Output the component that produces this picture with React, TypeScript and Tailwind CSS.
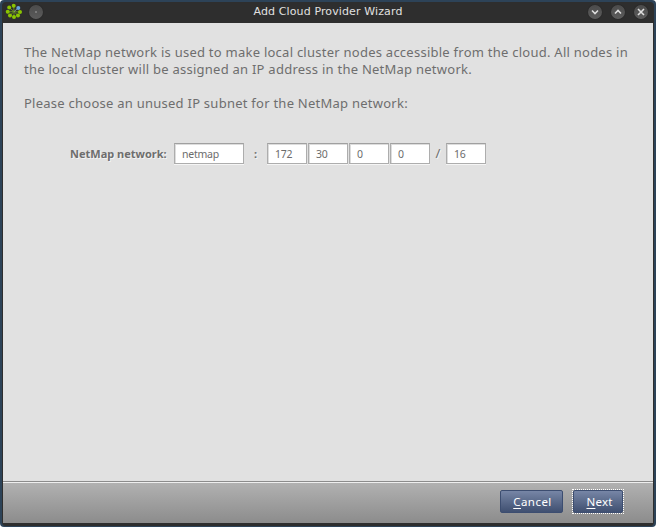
import React from "react";

const petals = [
  [13.7, 6.1], [9.2, 8], [7.7, 12.2], [10, 15.8], [14, 17.5], [18, 15.9], [20, 12.4],
];

function AppIcon() {
  return (
    <svg width="22" height="21" viewBox="0 0 22 21" className="block">
      <g transform="translate(-4 -2.4)">
        {petals.map(([x, y]) => (
          <g key={`${x}-${y}`}>
            <line x1="14" y1="12" x2={x} y2={y} stroke="#6b9422" strokeWidth=".9" />
            <circle cx={x} cy={y} r="2" fill="#8ac400" />
          </g>
        ))}
        <line x1="14" y1="12" x2="18" y2="8.5" stroke="#8f9aa0" strokeWidth=".9" />
        <circle cx="18.3" cy="8.3" r="2" fill="#64a5e2" />
      </g>
    </svg>
  );
}

function RoundButton({ children }: { children: React.ReactNode }) {
  return (
    <div className="flex h-[14px] w-[14px] items-center justify-center rounded-full bg-linear-to-b from-[#4b4b4b] to-[#5c5c5c] shadow-[0_0_1px_#111]">
      <svg width="14" height="14" viewBox="0 0 14 14" fill="none" stroke="#dedede" strokeWidth="1.6">
        {children}
      </svg>
    </div>
  );
}

function Field({ value, wide = false }: { value: string; wide?: boolean }) {
  return (
    <div
      className={`flex h-[21px] items-center border border-[#adadad] border-t-[#a0a0a0] bg-white pt-[2px] pl-[7px] font-['Noto_Sans',sans-serif] text-[10.5px] leading-none tracking-[-0.25px] text-[#6c6c6c] shadow-[inset_1px_1px_0_#ddd,0_1px_0_#f5f5f5] ${wide ? "w-[70px]" : "w-[40px]"}`}
    >
      {value}
    </div>
  );
}

function DialogButton({ label, focused = false }: { label: string; focused?: boolean }) {
  return (
    <div className={focused ? "border border-dotted border-white" : "border border-transparent"}>
      <div
        className={`flex h-[23px] items-center justify-center rounded-[2px] border border-[#3c4d70] bg-linear-to-b from-[#7786a6] to-[#405071] font-['Noto_Sans',sans-serif] text-[11.5px] leading-none text-white ${focused ? "w-[50px] pl-[3px] tracking-[0.2px]" : "w-[63px] pl-[2px] tracking-[0.45px]"}`}
      >
        <span>
          <span className="underline underline-offset-2">{label[0]}</span>
          {label.slice(1)}
        </span>
      </div>
    </div>
  );
}

export default function App() {
  return (
    <div className="bg-white">
      <div className="h-[527px] w-[656px] overflow-hidden rounded-[4px] bg-[#2d4358] pt-[2px] pr-[2px] pb-[1px] pl-[2px]">
        <div className="flex h-[524px] w-[652px] flex-col rounded-[4px] bg-[#2e2e2e] px-px pb-[3px]">
          <header className="flex h-[21px] shrink-0 items-center pr-[5px] pl-[1px]">
            <AppIcon />
            <div className="ml-[3px] pb-[2px]">
              <RoundButton>
                <circle cx="7" cy="7" r=".8" fill="#aaa" stroke="none" />
              </RoundButton>
            </div>
            <h1 className="flex-1 pb-[2px] pl-[25px] text-center font-['DejaVu_Sans',sans-serif] text-[11px] leading-none tracking-[0.12px] text-[#e0e0e0]">
              Add Cloud Provider Wizard
            </h1>
            <div className="flex gap-[9px] pb-[2px]">
              <RoundButton><path d="M4 5.5 7 8.5 10 5.5" /></RoundButton>
              <RoundButton><path d="M4 8.5 7 5.5 10 8.5" /></RoundButton>
              <RoundButton><path d="M4 4 10 10M10 4 4 10" /></RoundButton>
            </div>
          </header>
          <main className="h-[458px] shrink-0 bg-[#e1e1e1] pt-[21px] pl-[21px] font-['Noto_Sans',sans-serif] text-[13px] leading-[17px] text-[#6e6e6e]">
            <p className="whitespace-nowrap tracking-[0.25px]">
              The NetMap network is used to make local cluster nodes accessible from the cloud. All nodes in
              <br />
              the local cluster will be assigned an IP address in the NetMap network.
            </p>
            <p className="mt-[17px] whitespace-nowrap tracking-[0.25px]">
              Please choose an unused IP subnet for the NetMap network:
            </p>
            <div className="mt-[31px] flex items-center pl-[46px]">
              <span className="w-[104px] whitespace-nowrap text-[11px] font-bold [text-shadow:1px_1px_0_#f4f4f4]">
                NetMap network:
              </span>
              <Field value="netmap" wide />
              <span className="w-[23px] text-center text-[11px] font-bold [text-shadow:1px_1px_0_#f4f4f4]">:</span>
              <div className="flex gap-px">
                <Field value="172" />
                <Field value="30" />
                <Field value="0" />
                <Field value="0" />
              </div>
              <span className="w-[16px] text-center text-[13px] [text-shadow:1px_1px_0_#f4f4f4]">/</span>
              <Field value="16" />
            </div>
          </main>
          <footer className="flex flex-1 items-start justify-end gap-[8px] border-t border-[#8c8c8c] bg-linear-to-b from-[#b2b2b2] to-[#8c8c8c] pt-[7px] pr-[29px] shadow-[inset_0_1px_0_#eee]">
            <DialogButton label="Cancel" />
            <DialogButton label="Next" focused />
          </footer>
        </div>
      </div>
    </div>
  );
}
